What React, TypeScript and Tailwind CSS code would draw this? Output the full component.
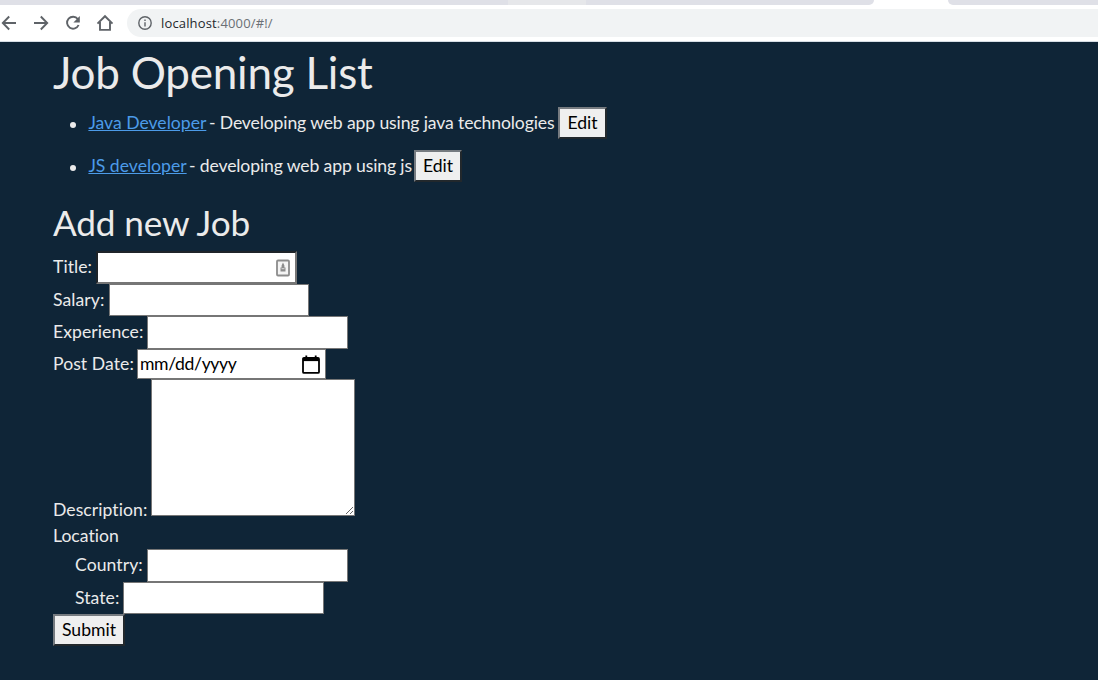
import type { ReactNode } from 'react';

function Toolbar() {
  return (
    <header className="h-[42px] bg-white border-b border-[#d5dde4] flex flex-col shrink-0">
      <div className="flex h-[5px] shrink-0 bg-[#dfe0e7]">
        <div className="w-[508px]" />
        <div className="w-[78px] bg-[#e6e7ea]" />
        <div className="w-[280px]" />
        <div className="w-[90px] bg-white flex justify-between">
          <span className="w-[8px] h-[5px] bg-[#dfe0e7] rounded-br-[6px]" />
          <span className="w-[8px] h-[5px] bg-[#dfe0e7] rounded-bl-[6px]" />
        </div>
      </div>
      <div className="flex items-center h-[28px] mt-[4px] shrink-0">
        <div className="w-[127px] shrink-0">
          <svg width="127" height="28" viewBox="0 0 127 28" fill="none" stroke="#5f6368" strokeWidth="1.9">
            <path d="M16 14H3M9.2 7.5L2.8 14L9.2 20.5" />
            <path d="M34 14H47M40.8 7.5L47.2 14L40.8 20.5" />
            <path d="M77.8 10A6 6 0 1 0 78.6 16" />
            <path d="M79.8 7V13.4H73.4Z" fill="#5f6368" stroke="none" />
            <path d="M97.5 14.6L105 7.2L112.5 14.6M100 13V20.9H110V13" />
          </svg>
        </div>
        <div className="flex-1 h-full bg-[#f1f3f4] rounded-l-full flex items-center pl-[11px]">
          <svg width="14" height="14" viewBox="0 0 14 14" fill="none" stroke="#5f6368" strokeWidth="1.4">
            <circle cx="7" cy="7" r="6.2" />
            <path d="M7 6.2V10.4M7 3.6V5" />
          </svg>
          <span className="ml-[9px] font-['Open_Sans',sans-serif] text-[13px] leading-[18px] tracking-[0.15px] text-[#6b7075]">
            <span className="text-[#25282c]">localhost</span>:4000/#!/
          </span>
        </div>
      </div>
    </header>
  );
}

function Button({ children, className }: { children: ReactNode; className: string }) {
  return (
    <button
      className={`bg-[#efefef] text-black border-2 border-t-[#767b80] border-l-[#767b80] border-r-[#22282c] border-b-[#22282c] whitespace-nowrap flex items-center justify-center ${className}`}
    >
      {children}
    </button>
  );
}

interface JobProps {
  title: string;
  text: string;
  linkWidth: string;
  textWidth: string;
  buttonWidth: string;
  className: string;
}

function Job({ title, text, linkWidth, textWidth, buttonWidth, className }: JobProps) {
  return (
    <li className={`flex items-center whitespace-nowrap ${className}`}>
      <span className="mt-[3px] ml-[17px] mr-[12px] size-[6px] rounded-full bg-[#ebebeb]" />
      <span className={linkWidth}>
        <a href="#" className="text-[#4c9be8] underline">{title}</a>
      </span>
      <span className={`tracking-[-0.13px] ${textWidth}`}>- {text}</span>
      <Button className={`h-[32px] ${buttonWidth}`}>Edit</Button>
    </li>
  );
}

function Row({ label, labelWidth, className, children }: { label: string; labelWidth: string; className: string; children: ReactNode }) {
  return (
    <div className={`flex ${className}`}>
      <label className={`whitespace-nowrap shrink-0 tracking-[0.06px] ${labelWidth}`}>{label}</label>
      {children}
    </div>
  );
}

const box = 'bg-white border border-[#767676] outline-none';

export default function App() {
  return (
    <div className="w-full h-[680px] overflow-hidden flex flex-col bg-[#0f2537] text-[#ebebeb] font-[Lato,sans-serif] text-[17.6px] leading-[26px] [font-variant-ligatures:none]">
      <Toolbar />
      <main className="pl-[53px] flex flex-col">
        <h1 className="mt-[4px] h-[53px] text-[44px] leading-[53px] tracking-[-0.22px] whitespace-nowrap">Job Opening List</h1>
        <ul className="mt-[8px] flex flex-col">
          <Job title="Java Developer" text="Developing web app using java technologies" linkWidth="w-[121px] pl-[0.4px]" textWidth="w-[349px]" buttonWidth="w-[49px]" className="h-[32px]" />
          <Job title="JS developer" text="developing web app using js" linkWidth="w-[101px] pl-[0.4px]" textWidth="w-[225px]" buttonWidth="w-[48px]" className="mt-[11px] h-[32px]" />
        </ul>
        <h2 className="mt-[19px] h-[42px] text-[35.2px] leading-[42px] tracking-[-0.15px] whitespace-nowrap">Add new Job</h2>
        <form className="mt-[8px] flex flex-col items-start">
          <Row label="Title:" labelWidth="w-[43px] mt-[3px]" className="h-[33px] items-start">
            <div className="w-[201px] h-[33px] bg-white border-2 border-t-[#1e2429] border-l-[#1e2429] border-r-[#767676] border-b-[#767676] flex items-center justify-end pr-[5px]">
              <svg width="14" height="18" viewBox="0 0 14 18">
                <rect x="1" y="1.5" width="12" height="15" rx="1" fill="#f4f4f4" stroke="#8c8c8c" strokeWidth="1.8" />
                <path d="M7 3.5L8.4 6.5V8.5H9.5V12.5H4.5V8.5H5.6V6.5Z" fill="#8c8c8c" />
                <path d="M5.5 9.7H8.5" stroke="#ddd" />
              </svg>
            </div>
          </Row>
          <Row label="Salary:" labelWidth="w-[56px]" className="h-[32px] items-center">
            <input className={`w-[200px] h-[32px] ${box}`} />
          </Row>
          <Row label="Experience:" labelWidth="w-[94px] -mt-[2px]" className="h-[33px] items-center">
            <input className={`w-[201px] h-[33px] ${box}`} />
          </Row>
          <Row label="Post Date:" labelWidth="w-[84px]" className="h-[30px] items-center">
            <div className={`w-[189px] h-[30px] text-black flex items-center justify-between pl-[2px] pr-[5px] ${box}`}>
              <span className="tracking-[-0.35px]">mm/dd/yyyy</span>
              <svg width="18" height="19" viewBox="0 0 18 19" fill="none" stroke="#000" strokeWidth="1.8">
                <rect x="1" y="2.9" width="16" height="15" rx="1" />
                <path d="M1 4.5H17" strokeWidth="3.2" />
                <path d="M4.3 0.5V4M13.7 0.5V4" />
              </svg>
            </div>
          </Row>
          <Row label="Description:" labelWidth="w-[98px] self-end" className="h-[144px] items-start">
            <textarea className={`w-[204px] h-[137px] resize ${box}`} />
          </Row>
          <div className="h-[26px]">Location</div>
          <div className="pl-[22px]">
            <Row label="Country:" labelWidth="w-[72px] -mt-[2px]" className="h-[33px] items-center">
              <input className={`w-[201px] h-[33px] ${box}`} />
            </Row>
            <Row label="State:" labelWidth="w-[48px]" className="h-[32px] items-center">
              <input className={`w-[201px] h-[32px] ${box}`} />
            </Row>
          </div>
          <Button className="w-[72px] h-[32px]">Submit</Button>
        </form>
      </main>
    </div>
  );
}
